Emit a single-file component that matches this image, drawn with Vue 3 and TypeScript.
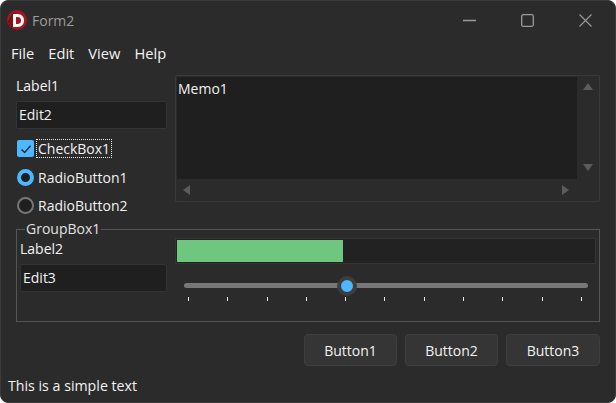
<script setup lang="ts">
import { ref } from "vue";

const menus = ["File", "Edit", "View", "Help"];
const buttons = ["Button1", "Button2", "Button3"];
const ticks = Array.from({ length: 11 }, (_, i) => i);
const progress = ref(39.8);
const slider = ref(40.3);
</script>

<template>
  <div class="window">
    <div class="titlebar">
      <svg class="logo" width="20" height="20" viewBox="0 0 20 20">
        <circle cx="10" cy="10" r="10" fill="#a3161f" />
        <path d="M1 13 L7 3 M2 16 L9 4 M4 18 L8 10" stroke="#6b0d14" stroke-width="1.5" fill="none" />
        <path d="M6 4 H10.5 C15 4 17 7 17 10.5 C17 14 15 17 10.5 17 H6 Z M9 7 V14 H10.5 C13 14 14 12.5 14 10.5 C14 8.5 13 7 10.5 7 Z" fill="#fff" fill-rule="evenodd" />
      </svg>
      <span class="title">Form2</span>
      <div class="winbtns">
        <svg width="13" height="13" viewBox="0 0 13 13"><path d="M0 6.5 H13" stroke="#9a9a9a" stroke-width="1.4" /></svg>
        <svg width="13" height="13" viewBox="0 0 13 13"><rect x="0.7" y="0.7" width="11.6" height="11.6" rx="1.5" fill="none" stroke="#9a9a9a" stroke-width="1.3" /></svg>
        <svg width="13" height="13" viewBox="0 0 13 13"><path d="M0.5 0.5 L12.5 12.5 M12.5 0.5 L0.5 12.5" stroke="#9a9a9a" stroke-width="1.1" /></svg>
      </div>
    </div>

    <div class="menu">
      <span v-for="m in menus" :key="m">{{ m }}</span>
    </div>

    <div class="top">
      <div class="left">
        <div class="label">Label1</div>
        <div class="edit">Edit2</div>
        <div class="check-row">
          <span class="check">
            <svg width="12" height="12" viewBox="0 0 12 12"><path d="M1.5 6.5 L4.7 9.5 L10.5 2.8" fill="none" stroke="#1f2a33" stroke-width="1.5" /></svg>
          </span>
          <span class="focus">CheckBox1</span>
        </div>
        <div class="radio-row">
          <span class="radio on"></span>
          <span>RadioButton1</span>
        </div>
        <div class="radio-row">
          <span class="radio"></span>
          <span>RadioButton2</span>
        </div>
      </div>

      <div class="memo">
        <div class="memo-main">
          <div class="memo-text">Memo1</div>
          <div class="vbar">
            <span class="arrow up"></span>
            <span class="arrow down"></span>
          </div>
        </div>
        <div class="hbar">
          <span class="arrow lft"></span>
          <span class="arrow rgt"></span>
        </div>
      </div>
    </div>

    <fieldset class="group">
      <legend>GroupBox1</legend>
      <div class="group-left">
        <div class="label2">Label2</div>
        <div class="edit">Edit3</div>
      </div>
      <div class="group-right">
        <div class="progress">
          <div class="fill" :style="{ width: progress + '%' }"></div>
        </div>
        <div class="slider">
          <div class="track">
            <span class="thumb" :style="{ left: slider + '%' }"></span>
          </div>
          <div class="ticks">
            <span v-for="t in ticks" :key="t"></span>
          </div>
        </div>
      </div>
    </fieldset>

    <div class="buttons">
      <button v-for="b in buttons" :key="b" type="button">{{ b }}</button>
    </div>

    <div class="status">This is a simple text</div>
  </div>
</template>

<style scoped>
.window {
  box-sizing: border-box;
  width: 616px;
  height: 403px;
  background: #2b2b2b;
  border: 1px solid #3c3c3c;
  border-radius: 8px;
  font-family: "Open Sans", "Noto Sans", sans-serif;
  font-size: 14px;
  color: #f2f2f2;
  overflow: hidden;
  padding: 0 15px 0 15px;
  display: flex;
  flex-direction: column;
}

.titlebar {
  display: flex;
  align-items: center;
  height: 38px;
  margin: 0 -15px 0 -9px;
  flex: none;
}
.logo {
  margin-right: 5px;
}
.title {
  color: #9c9c9c;
  font-size: 14px;
}
.winbtns {
  margin-left: auto;
  display: flex;
  gap: 45px;
  margin-right: 23px;
}

.menu {
  display: flex;
  gap: 14px;
  height: 26px;
  align-items: center;
  margin: 1px 0 0 -5px;
  font-size: 14.7px;
  flex: none;
}

.top {
  display: flex;
  gap: 8px;
  margin-top: 9px;
  flex: none;
  align-items: flex-start;
}
.left {
  width: 151px;
  flex: none;
  display: flex;
  flex-direction: column;
}
.label {
  height: 26px;
  line-height: 21px;
}
.edit {
  box-sizing: border-box;
  height: 28px;
  line-height: 25px;
  background: #1f1f1f;
  border: 1px solid #343434;
  border-radius: 2px;
  padding-left: 2px;
}
.check-row,
.radio-row {
  display: flex;
  align-items: center;
  height: 28px;
}
.check-row {
  margin-top: 10px;
  height: 19px;
  margin-bottom: 5px;
}
.check {
  box-sizing: border-box;
  width: 17px;
  height: 17px;
  margin-left: 1px;
  border-radius: 2px;
  background: #4db8ff;
  display: flex;
  align-items: center;
  justify-content: center;
  margin-right: 2px;
}
.focus {
  border: 1px dotted #e8e8e8;
  padding: 0 1px;
  line-height: 17px;
}
.radio {
  box-sizing: border-box;
  width: 17px;
  height: 17px;
  margin: 0 4px 0 1px;
  border-radius: 50%;
  background: #1f1f1f;
  border: 2px solid #777;
}
.radio.on {
  border: 4px solid #4db8ff;
}

.memo {
  box-sizing: border-box;
  flex: 1;
  height: 127px;
  border: 1px solid #3a3a3a;
  border-radius: 1px;
  padding: 1px;
  display: flex;
  flex-direction: column;
}
.memo-main {
  flex: 1;
  display: flex;
}
.memo-text {
  flex: 1;
  background: #1f1f1f;
  padding: 2px 1px;
}
.vbar {
  width: 21px;
  display: flex;
  flex-direction: column;
  align-items: center;
  justify-content: space-between;
  padding: 6px 0 8px;
}
.hbar {
  height: 21px;
  display: flex;
  align-items: center;
  justify-content: space-between;
  padding: 0 29px 0 6px;
}
.arrow {
  width: 0;
  height: 0;
  border-style: solid;
  border-color: transparent;
}
.arrow.up {
  border-width: 0 5px 7px;
  border-bottom-color: #5c5c5c;
}
.arrow.down {
  border-width: 7px 5px 0;
  border-top-color: #5c5c5c;
}
.arrow.lft {
  border-width: 5px 7px 5px 0;
  border-right-color: #5c5c5c;
}
.arrow.rgt {
  border-width: 5px 0 5px 7px;
  border-left-color: #5c5c5c;
}

.group {
  box-sizing: border-box;
  margin: 2px 0 0;
  padding: 1px 3px 0 3px;
  height: 101px;
  flex: none;
  min-width: 0;
  border: 1px solid #555;
  display: flex;
  gap: 8px;
}
.group legend {
  margin-left: 5px;
  padding: 0 1px;
  color: #e0e0e0;
  line-height: 16px;
  font-size: 14px;
}
.group-left {
  width: 147px;
  flex: none;
}
.label2 {
  height: 26px;
  line-height: 22px;
}
.group-right {
  flex: 1;
  min-width: 0;
}
.progress {
  box-sizing: border-box;
  height: 26px;
  margin-top: 0;
  border: 1px solid #353535;
  background: #222;
  padding: 1px;
}
.fill {
  height: 100%;
  background: #6fc67f;
}
.slider {
  padding: 19px 8px 0 9px;
}
.track {
  position: relative;
  height: 5px;
  border-radius: 3px;
  background: #777;
}
.thumb {
  position: absolute;
  top: 50%;
  width: 12px;
  height: 12px;
  border: 4px solid #3d3d3d;
  border-radius: 50%;
  background: #4db8ff;
  transform: translate(-50%, -50%);
}
.ticks {
  display: flex;
  justify-content: space-between;
  margin: 9px 6px 0 4px;
}
.ticks span {
  width: 1px;
  height: 4px;
  background: #eee;
}

.buttons {
  display: flex;
  justify-content: flex-end;
  gap: 8px;
  margin-top: 12px;
  flex: none;
}
.buttons button {
  box-sizing: border-box;
  width: 93px;
  height: 32px;
  background: #353535;
  border: 1px solid #3f3f3f;
  border-radius: 4px;
  color: #f2f2f2;
  font: inherit;
}
.buttons button:last-child {
  width: 94px;
}

.status {
  margin: 10px 0 0 -8px;
  line-height: 20px;
  font-size: 14.2px;
  flex: none;
}
</style>

<style>
html,
body {
  background: #fff;
  overflow: hidden;
}
</style>
